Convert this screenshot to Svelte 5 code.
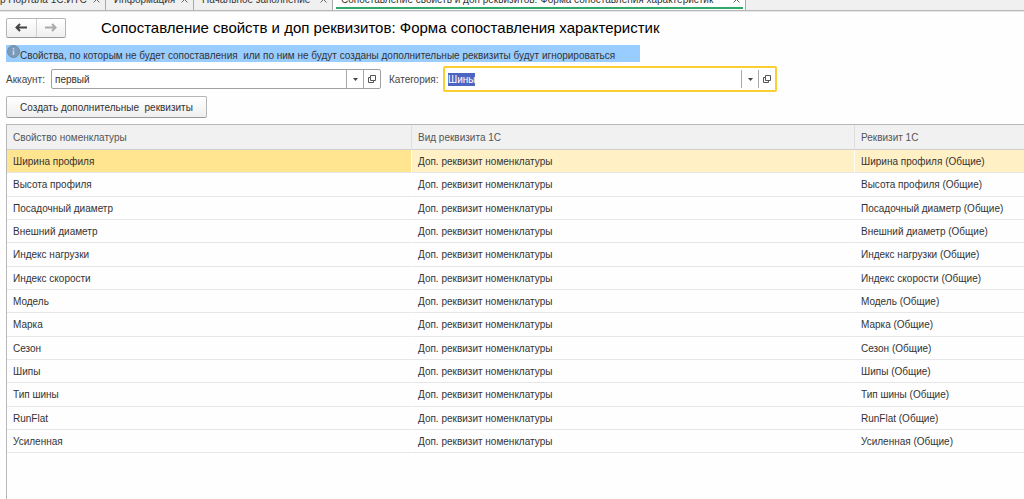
<script>
  import { onMount } from "svelte";

  let account = "первый";
  let category = "Шины";
  let categoryInput;
  let selected = 0;

  const tabs = [
    { title: "р Портала 1С:ИТС", width: 106 },
    { title: "Информация", width: 88 },
    { title: "Начальное заполнение", width: 139 },
    { title: "Сопоставление свойств и доп реквизитов: Форма сопоставления характеристик", width: 413, active: true },
  ];

  const names = [
    "Ширина профиля",
    "Высота профиля",
    "Посадочный диаметр",
    "Внешний диаметр",
    "Индекс нагрузки",
    "Индекс скорости",
    "Модель",
    "Марка",
    "Сезон",
    "Шипы",
    "Тип шины",
    "RunFlat",
    "Усиленная",
  ];

  onMount(() => {
    categoryInput.focus();
    categoryInput.select();
  });
</script>

{#snippet fieldButtons()}
  <button class="field-btn" aria-label="Выбрать из списка">
    <svg width="5" height="3" viewBox="0 0 5 3"><path d="M0 0h5L2.5 3z" fill="#444" /></svg>
  </button>
  <button class="field-btn" aria-label="Открыть">
    <svg width="8" height="8" viewBox="0 0 8 8" fill="none" stroke="#555">
      <path d="M2.5 .5h5v5h-5z" />
      <path d="M2.5 2.5h-2v5h5v-2" />
    </svg>
  </button>
{/snippet}

<div class="page">
  <nav class="tabs">
    {#each tabs as tab}
      <a href="#tab" class="tab" class:active={tab.active} style="width: {tab.width}px">
        <span>{tab.title}</span>
        <svg width="7" height="7" viewBox="0 0 7 7"><path d="M.5 .5l6 6M6.5 .5l-6 6" stroke="#666" /></svg>
      </a>
    {/each}
  </nav>

  <main>
    <header>
      <div class="history">
        <button aria-label="Назад">
          <svg width="12" height="9" viewBox="0 0 12 9" fill="none" stroke="#444" stroke-width="2">
            <path d="M1.5 4.5H12M5 1L1.5 4.5L5 8" />
          </svg>
        </button>
        <button aria-label="Вперед">
          <svg width="12" height="9" viewBox="0 0 12 9" fill="none" stroke="#aaa" stroke-width="2">
            <path d="M0 4.5H10.5M7 1l3.5 3.5L7 8" />
          </svg>
        </button>
      </div>
      <h1>Сопоставление свойств и доп реквизитов: Форма сопоставления характеристик</h1>
    </header>

    <p class="notice">
      <svg width="13" height="13" viewBox="0 0 13 13">
        <circle cx="6.5" cy="6.5" r="6" fill="#7d9bb8" stroke="#6f8ba6" />
        <path d="M6.5 5.5v4.5M6.5 3v1.5" stroke="#c4ddf5" stroke-width="1.5" />
      </svg>
      <span>Свойства, по которым не будет сопоставления &nbsp;или по ним не будут созданы дополнительные реквизиты будут игнорироваться</span>
    </p>

    <div class="filters">
      <label for="account">Аккаунт:</label>
      <div class="field">
        <input id="account" type="text" bind:value={account} />
        {@render fieldButtons()}
      </div>
      <label for="category" class="second">Категория:</label>
      <div class="field focused">
        <input id="category" type="text" bind:value={category} bind:this={categoryInput} />
        {@render fieldButtons()}
      </div>
    </div>

    <button class="create">Создать дополнительные &nbsp;реквизиты</button>

    <div class="list">
      <table>
        <colgroup>
          <col class="col-name" />
          <col class="col-kind" />
          <col />
        </colgroup>
        <thead>
          <tr>
            <th>Свойство номенклатуры</th>
            <th>Вид реквизита 1С</th>
            <th>Реквизит 1С</th>
          </tr>
        </thead>
        <tbody>
          {#each names as name, i}
            <tr class:selected={selected === i} onclick={() => (selected = i)}>
              <td>{name}</td>
              <td>Доп. реквизит номенклатуры</td>
              <td>{name} (Общие)</td>
            </tr>
          {/each}
        </tbody>
      </table>
    </div>
  </main>
</div>

<style>
  :global(body) {
    margin: 0;
    background: #fefefe;
  }

  .page {
    display: flex;
    flex-direction: column;
    height: 100vh;
    overflow: hidden;
    font: 10px/13px "Liberation Sans", Arial, sans-serif;
    color: #333;
  }

  button,
  input {
    font: inherit;
    color: inherit;
    padding: 0;
    border: 0;
    background: none;
    box-sizing: border-box;
  }

  .tabs {
    display: flex;
    flex: none;
    height: 10px;
    background: #f0f0f0;
    border-bottom: 1px solid #b8b8b8;
    box-shadow: 0 1px #e6e6e6;
  }

  .tab {
    display: flex;
    align-items: flex-end;
    justify-content: space-between;
    box-sizing: border-box;
    height: 10px;
    padding: 0 5px 4px 8px;
    border-right: 1px solid #a8a8a8;
    overflow: hidden;
    white-space: nowrap;
    color: #333;
    text-decoration: none;
  }

  .tab:first-child {
    padding-left: 0;
  }

  .tab svg {
    flex: none;
    margin-bottom: 3px;
  }

  .tab.active {
    background: linear-gradient(#2fa86b, #2fa86b) 3px 7px / 407px 2px no-repeat #fefefe;
  }

  main {
    display: flex;
    flex-direction: column;
    flex: 1;
    min-height: 0;
    padding: 6px 0 0 6px;
  }

  header {
    display: flex;
    align-items: center;
    gap: 35px;
    height: 21px;
  }

  .history {
    display: flex;
    box-sizing: border-box;
    width: 60px;
    height: 20px;
    border: 1px solid #b5b5b5;
    border-bottom-color: #999;
    border-radius: 2px;
    background: linear-gradient(#fff, #efefef);
  }

  .history button {
    flex: 1;
    display: flex;
    align-items: center;
    justify-content: center;
  }

  .history button + button {
    border-left: 1px solid #d0d0d0;
  }

  h1 {
    margin: 0;
    font-size: 15px;
    line-height: 20px;
    font-weight: normal;
    color: #000;
    white-space: nowrap;
  }

  .notice {
    display: flex;
    box-sizing: border-box;
    align-self: flex-start;
    min-width: 634px;
    height: 17px;
    margin: 7px 0 0;
    padding-left: 1px;
    background: #99ccff;
    white-space: nowrap;
  }

  .notice span {
    padding-top: 4px;
  }

  .filters {
    display: flex;
    align-items: center;
    height: 26px;
    margin-top: 4px;
  }

  .filters label {
    width: 45px;
    color: #444;
  }

  .filters .second {
    width: 54px;
    margin-left: 8px;
  }

  .field {
    display: flex;
    align-items: center;
    box-sizing: border-box;
    width: 330px;
    height: 20px;
    border: 1px solid #a0a0a0;
    border-radius: 2px;
    background: #fff;
  }

  .field input {
    flex: 1;
    min-width: 0;
    padding-left: 3px;
    outline: none;
  }

  .field input::selection {
    background: #4a66c2;
    color: #fff;
  }

  .field.focused {
    width: 334px;
    height: 26px;
    border: 2px solid #fbcf33;
  }

  .field-btn {
    display: flex;
    align-items: center;
    justify-content: center;
    width: 17px;
    height: 18px;
    border-left: 1px solid #a8a8a8;
  }

  .create {
    align-self: flex-start;
    min-width: 201px;
    height: 22px;
    margin-top: 4px;
    padding: 0 10px;
    border: 1px solid #b5b5b5;
    border-bottom-color: #999;
    border-radius: 2px;
    background: linear-gradient(#fff, #efefef);
  }

  .list {
    flex: 1;
    min-height: 0;
    margin-top: 6px;
    border: 1px solid #b8b8b8;
    border-width: 1px 0 0 1px;
    overflow: hidden;
  }

  table {
    width: 100%;
    table-layout: fixed;
    border-spacing: 0;
  }

  .col-name {
    width: 404px;
  }

  .col-kind {
    width: 443px;
  }

  th,
  td {
    box-sizing: border-box;
    padding: 0 0 0 6px;
    text-align: left;
    white-space: nowrap;
  }

  th {
    height: 25px;
    font-weight: normal;
    color: #555;
    background: #f1f1f1;
    border-bottom: 1px solid #cfcfcf;
  }

  th + th {
    border-left: 1px solid #dedede;
  }

  td {
    height: 23px;
    border-bottom: 1px solid #e6e6e6;
  }

  td + td {
    border-left: 1px solid #fefefe;
  }

  tr:nth-child(3n + 2) td {
    height: 24px;
  }

  .selected td {
    background: #fff1c5;
  }

  .selected td:first-child {
    background: #ffe58f;
  }
</style>
